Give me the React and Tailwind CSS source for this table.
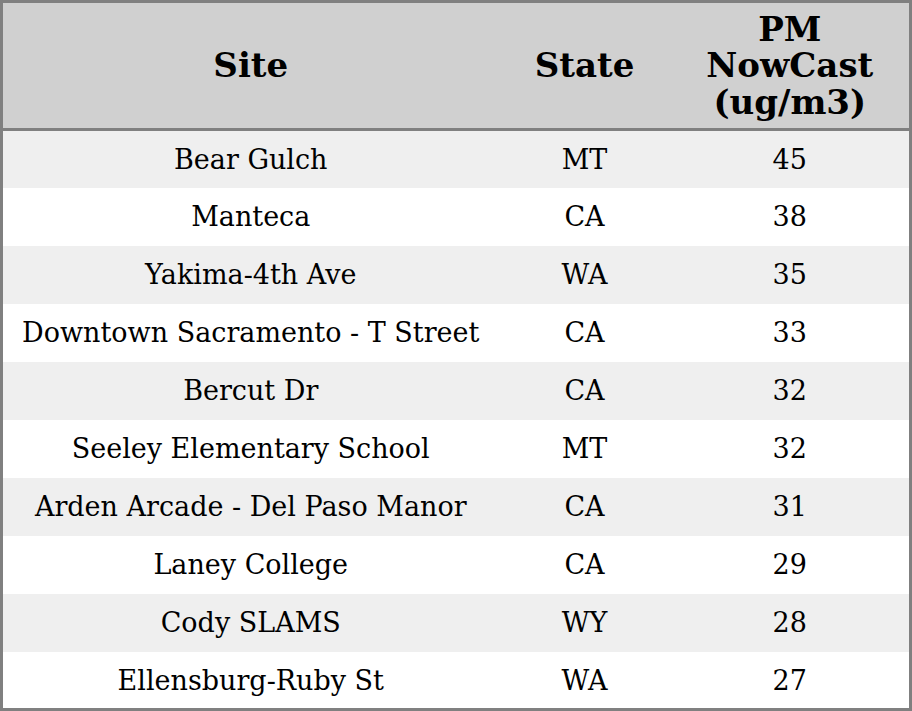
import React from "react";

const ROWS = [
  ["Bear Gulch", "MT", 45],
  ["Manteca", "CA", 38],
  ["Yakima-4th Ave", "WA", 35],
  ["Downtown Sacramento - T Street", "CA", 33],
  ["Bercut Dr", "CA", 32],
  ["Seeley Elementary School", "MT", 32],
  ["Arden Arcade - Del Paso Manor", "CA", 31],
  ["Laney College", "CA", 29],
  ["Cody SLAMS", "WY", 28],
  ["Ellensburg-Ruby St", "WA", 27],
];

export default function App() {
  return (
    <div className="w-[912px] h-[711px] bg-white font-['DejaVu_Serif',serif] text-black">
      <table className="w-full h-full border-[3px] border-[#808080] border-collapse table-fixed">
        <colgroup>
          <col className="w-[497px]" />
          <col className="w-[172px]" />
          <col />
        </colgroup>
        <thead>
          <tr className="bg-[#d0d0d0] h-[128px] border-b-[3px] border-[#808080]">
            <th className="text-[34px] font-bold leading-[36.5px] text-center">Site</th>
            <th className="text-[34px] font-bold leading-[36.5px] text-center">State</th>
            <th className="text-[34px] font-bold leading-[36.5px] text-center px-4">
              PM NowCast (ug/m3)
            </th>
          </tr>
        </thead>
        <tbody>
          {ROWS.map(([site, state, pm], i) => (
            <tr key={site + i} className={`h-[57.7px] ${i % 2 === 0 ? "bg-[#efefef]" : "bg-white"}`}>
              <td className="text-[27px] text-center whitespace-nowrap pt-[2px]">{site}</td>
              <td className="text-[27px] text-center pt-[2px]">{state}</td>
              <td className="text-[27px] text-center pt-[2px]">{pm}</td>
            </tr>
          ))}
        </tbody>
      </table>
    </div>
  );
}
